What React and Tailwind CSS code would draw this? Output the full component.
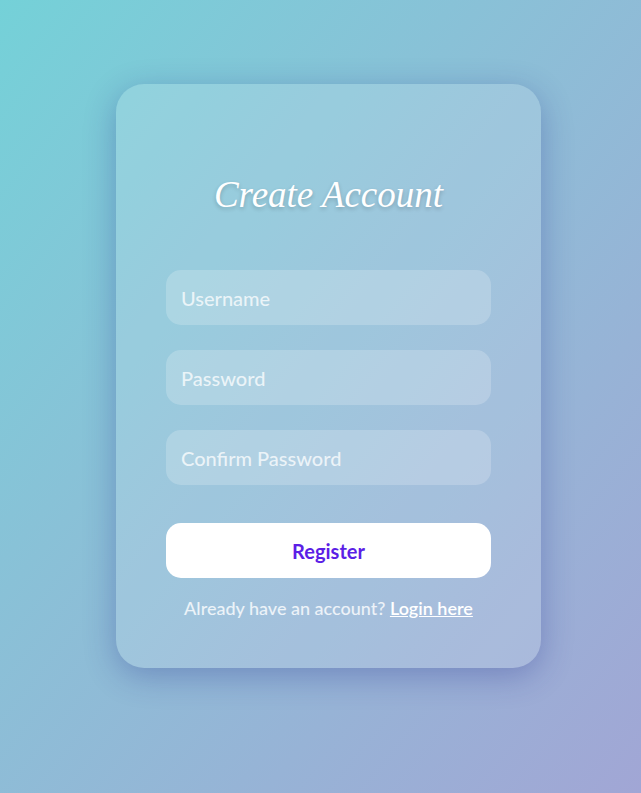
export default function App() {
  const inputCls =
    "w-full h-[55px] rounded-[15px] bg-white/20 px-[15px] text-[20px] font-medium text-white placeholder:text-white/75 outline-none";
  return (
    <div
      className="min-h-[793px] w-full bg-gradient-to-br from-[#74d1d8] to-[#a1a6d5] flex justify-center pt-[84px] pl-[16px]"
      style={{ fontFamily: "Lato, 'Noto Sans', sans-serif" }}
    >
      <div className="w-[425px] h-[584px] rounded-[28px] bg-white/15 shadow-[0_8px_32px_rgba(31,38,135,0.3)] px-[50px] pt-[88px] flex flex-col">
        <h1
          className="text-center text-white italic text-[37px] leading-[46px] [text-shadow:0_2px_4px_rgba(0,0,0,0.2)]"
          style={{ fontFamily: "'Liberation Serif', serif" }}
        >
          Create Account
        </h1>
        <div className="mt-[52px] flex flex-col gap-[25px]">
          <input className={inputCls} placeholder="Username" />
          <input className={inputCls} placeholder="Password" type="password" />
          <input className={inputCls} placeholder="Confirm Password" type="password" />
        </div>
        <button className="mt-[38px] h-[55px] w-full rounded-[15px] bg-white text-[#5c1fe6] text-[20px] font-bold">
          Register
        </button>
        <p className="mt-[17px] text-center text-[18px] font-medium text-white/80">
          Already have an account?{" "}
          <a className="text-white underline font-semibold">Login here</a>
        </p>
      </div>
    </div>
  );
}
